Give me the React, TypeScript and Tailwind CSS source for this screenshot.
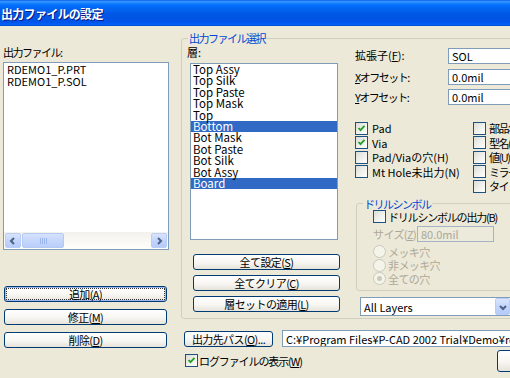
import React from "react";

const layers = [
	{ name: "Top Assy", selected: false },
	{ name: "Top Silk", selected: false },
	{ name: "Top Paste", selected: false },
	{ name: "Top Mask", selected: false },
	{ name: "Top", selected: false },
	{ name: "Bottom", selected: true },
	{ name: "Bot Mask", selected: false },
	{ name: "Bot Paste", selected: false },
	{ name: "Bot Silk", selected: false },
	{ name: "Bot Assy", selected: false },
	{ name: "Board", selected: true },
];

// MS UI Gothic has narrow kana, so tighten Japanese labels
const JP = "tracking-[-0.6px]";
const KANA = "tracking-[-1.5px]";

const XPButton: React.FC<{ children: React.ReactNode; className?: string; focus?: boolean }> = ({
	children,
	className = "",
	focus = false,
}) => (
	<div
		className={`flex p-[1px] rounded-[3px] border border-[#003C74] bg-[linear-gradient(to_bottom,#FFFFFF_0%,#F7F6F2_55%,#E6E3DA_100%)] ${
			focus ? "shadow-[inset_0_0_0_1px_#9DB7EE]" : ""
		} ${className}`}
	>
		<div
			className={`flex-1 flex items-center justify-center text-[11px] leading-[12px] text-black whitespace-nowrap ${JP} ${
				focus ? "border border-dotted border-[#333]" : ""
			}`}
		>
			<span>{children}</span>
		</div>
	</div>
);

const TextBox: React.FC<{ value: string; className?: string; disabled?: boolean }> = ({
	value,
	className = "",
	disabled = false,
}) => (
	<div
		className={`flex items-center pl-[3px] overflow-hidden whitespace-nowrap text-[11px] leading-[12px] border ${
			disabled ? "border-[#A5B1C4] bg-[#EBEADB] text-[#ACA899]" : "border-[#7F9DB9] bg-white text-black"
		} ${className}`}
	>
		{value}
	</div>
);

const CheckBox: React.FC<{ checked?: boolean }> = ({ checked = false }) => (
	<span className="w-[13px] h-[13px] shrink-0 border border-[#1C5180] bg-[linear-gradient(135deg,#DCDCD7_0%,#F2F2EF_60%,#FFFFFF_100%)] flex items-center justify-center">
		{checked && (
			<svg width="9" height="9" viewBox="0 0 9 9">
				<path d="M1.5 4 L3.5 6.2 L7.5 1.8" stroke="#21A121" strokeWidth="1.8" fill="none" />
			</svg>
		)}
	</span>
);

const Radio: React.FC<{ checked?: boolean }> = ({ checked = false }) => (
	<span className="w-[13px] h-[13px] shrink-0 rounded-full border border-[#CAC8BB] bg-[#F5F4EA] flex items-center justify-center">
		{checked && <span className="w-[5px] h-[5px] rounded-full bg-[#CAC8BB]" />}
	</span>
);

const Arrow: React.FC<{ dir: "left" | "right" | "down" }> = ({ dir }) => {
	const pts = dir === "left" ? "5,1 2,4 5,7" : dir === "right" ? "3,1 6,4 3,7" : "1,3 4,6 7,3";
	return (
		<svg width="8" height="8" viewBox="0 0 8 8">
			<polyline points={pts} stroke="#4D6185" strokeWidth="2" fill="none" />
		</svg>
	);
};

const ScrollButton: React.FC<{ dir: "left" | "right" | "down"; className?: string }> = ({ dir, className = "" }) => (
	<div
		className={`flex items-center justify-center shrink-0 rounded-[2px] border border-[#B9CDF6] bg-[linear-gradient(to_bottom,#D9E5FD_0%,#C3D5FC_50%,#B5CBF8_100%)] ${className}`}
	>
		<Arrow dir={dir} />
	</div>
);

const HScroll: React.FC = () => (
	<div className="h-[17px] shrink-0 flex items-center px-[1px] bg-[linear-gradient(to_bottom,#F3F1EC,#FEFEFB)]">
		<ScrollButton dir="left" className="w-[16px] h-[15px]" />
		<div className="ml-[1px] w-[42px] h-[15px] rounded-[2px] border border-[#B5C9F5] bg-[linear-gradient(to_bottom,#D6E2FD_0%,#C6D7FC_50%,#BACEFA_100%)] flex items-center justify-center gap-[1px]">
			<span className="w-[1px] h-[6px] bg-[#9DB6EF]" />
			<span className="w-[1px] h-[6px] bg-[#9DB6EF]" />
			<span className="w-[1px] h-[6px] bg-[#9DB6EF]" />
			<span className="w-[1px] h-[6px] bg-[#9DB6EF]" />
		</div>
		<ScrollButton dir="right" className="ml-auto w-[16px] h-[15px]" />
	</div>
);

const App: React.FC = () => {
	return (
		<div className="w-[510px] h-[378px] overflow-hidden bg-[#ECE9D8] flex flex-col font-['Noto_Sans_CJK_JP',sans-serif] text-black text-[11px] leading-[12px]">
			{/* title bar */}
			<div className="h-[26px] shrink-0 flex items-center pl-[1px] bg-[linear-gradient(to_bottom,#0058EE_0%,#3A93FF_5%,#288EFF_9%,#127DFF_14%,#036FFC_20%,#0262EE_38%,#0057E5_54%,#0054E3_70%,#0055EB_86%,#005BF5_90%,#0062EF_95%,#0048D0_100%)]">
				<span className="text-white font-bold text-[12px] leading-[13px] tracking-[-0.7px] [text-shadow:1px_1px_#0A1883]">
					出力ファイルの設定
				</span>
			</div>

			<div className="flex flex-1 min-h-0">
				{/* left column */}
				<div className="w-[181px] shrink-0 pl-[3px] pt-[20px] flex flex-col">
					<div className={`h-[12px] ${KANA}`}>出力ファイル:</div>
					<div className="mt-[4px] w-[166px] h-[188px] border border-[#7F9DB9] bg-white flex flex-col">
						<div className="flex-1 pl-[3px]">
							<div>RDEMO1_P.PRT</div>
							<div>RDEMO1_P.SOL</div>
						</div>
						<HScroll />
					</div>
					<div className="mt-[36px] ml-[1px] w-[163px] flex flex-col gap-[7px]">
						<XPButton focus className="h-[16px]">
							追加(A)
						</XPButton>
						<XPButton className="h-[16px]">
							修正(<span className="underline">M</span>)
						</XPButton>
						<XPButton className="h-[16px]">
							削除(<span className="underline">D</span>)
						</XPButton>
					</div>
				</div>

				{/* right area */}
				<div className="w-[340px] shrink-0 flex flex-col">
					<div className="relative mt-[12px] h-[281px] w-[340px] shrink-0 border border-[#D0D0BF] rounded-[3px] flex">
						<span className={`absolute -top-[7px] left-[6px] px-[1px] bg-[#ECE9D8] text-[#0046D5] ${KANA}`}>
							出力ファイル選択
						</span>

						{/* layer column */}
						<div className="w-[173px] shrink-0 pt-[7px] pl-[8px] flex flex-col">
							<div className="-ml-[3px] h-[12px]">層:</div>
							<div className="mt-[5px] w-[148px] h-[177px] border border-[#7F9DB9] bg-white">
								{layers.map((l) => (
									<div
										key={l.name}
										className={`h-[11.4px] pl-[2px] text-[11.5px] leading-[11.4px] ${
											l.selected ? "bg-[#316AC5] text-white" : "text-black"
										}`}
									>
										{l.name}
									</div>
								))}
							</div>
							<div className="mt-[14px] ml-[3px] w-[147px] flex flex-col gap-[5px]">
								<XPButton className="h-[16px]">
									全て設定(<span className="underline">S</span>)
								</XPButton>
								<XPButton className="h-[16px]">
									全てクリア(<span className="underline">C</span>)
								</XPButton>
								<XPButton className="h-[16px]">
									層セットの適用(<span className="underline">L</span>)
								</XPButton>
							</div>
						</div>

						{/* options column */}
						<div className="flex-1 pt-[9px] flex flex-col">
							<div className="flex items-center h-[16px]">
								<span className="w-[93px] self-start pt-[1px]">
									拡張子(<span className="underline">F</span>):
								</span>
								<TextBox value="SOL" className="w-[120px] h-[16px]" />
							</div>
							<div className="mt-[5px] flex items-center h-[16px]">
								<span className={`w-[93px] ${KANA}`}>
									<span className="underline">X</span>オフセット:
								</span>
								<TextBox value="0.0mil" className="w-[120px] h-[16px]" />
							</div>
							<div className="mt-[4px] flex items-center h-[16px]">
								<span className={`w-[93px] ${KANA}`}>
									<span className="underline">Y</span>オフセット:
								</span>
								<TextBox value="0.0mil" className="w-[120px] h-[16px]" />
							</div>

							<div className="mt-[16px] h-[73px] flex">
								<div className="w-[118px] shrink-0 flex flex-col">
									{[
										{ t: "Pad", c: true },
										{ t: "Via", c: true },
										{ t: "Pad/Viaの穴(H)", c: false },
										{ t: "Mt Hole未出力(N)", c: false },
									].map((r) => (
										<div key={r.t} className="h-[14.5px] flex items-center gap-[4px] whitespace-nowrap">
											<CheckBox checked={r.c} />
											<span>{r.t}</span>
										</div>
									))}
								</div>
								<div className="shrink-0 flex flex-col">
									{["部品名(R)", "型名(P)", "値(U)", "ミラー(I)", "タイトル(E)"].map((t) => (
										<div key={t} className="h-[14.5px] flex items-center gap-[3px] whitespace-nowrap">
											<CheckBox />
											<span className={KANA}>{t}</span>
										</div>
									))}
								</div>
							</div>

							{/* drill symbol group */}
							<div className="relative mt-[9px] ml-[1px] h-[88px] w-[170px] shrink-0 border border-[#D0D0BF] rounded-[3px] pl-[16px] pt-[6px] flex flex-col">
								<span className={`absolute -top-[6px] left-[6px] px-[1px] bg-[#ECE9D8] text-[#0046D5] ${KANA}`}>
									ドリルシンボル
								</span>
								<div className="h-[13px] flex items-center gap-[2px] whitespace-nowrap">
									<CheckBox />
									<span className="tracking-[-1.2px]">ドリルシンボルの出力(B)</span>
								</div>
								<div className="mt-[3px] h-[16px] flex items-center">
									<span className={`w-[44px] shrink-0 text-[#ACA899] whitespace-nowrap ${JP}`}>
										サイズ(<span className="underline">Z</span>):
									</span>
									<TextBox value="80.0mil" disabled className="w-[77px] h-[16px] shrink-0" />
								</div>
								<div className={`mt-[3px] flex flex-col text-[#ACA899] ${JP}`}>
									<div className="h-[13.5px] flex items-center gap-[2px]">
										<Radio />
										<span>メッキ穴</span>
									</div>
									<div className="h-[13.5px] flex items-center gap-[2px]">
										<Radio />
										<span>非メッキ穴</span>
									</div>
									<div className="h-[13.5px] flex items-center gap-[2px]">
										<Radio checked />
										<span>全ての穴</span>
									</div>
								</div>
							</div>

							<div className="mt-[6px] ml-[5px] w-[151px] h-[19px] shrink-0 border border-[#7F9DB9] bg-white flex items-center">
								<span className="flex-1 pl-[3px]">All Layers</span>
								<ScrollButton dir="down" className="w-[15px] h-full" />
							</div>
						</div>
					</div>

					{/* output path */}
					<div className="mt-[11px] flex items-center">
						<XPButton className="ml-[3px] w-[89px] h-[16px] shrink-0">
							出力先パス(<span className="underline">O</span>)...
						</XPButton>
						<TextBox
							value="C:¥Program Files¥P-CAD 2002 Trial¥Demo¥rdemo1"
							className="ml-[9px] w-[240px] h-[17px] shrink-0"
						/>
					</div>

					{/* log */}
					<div className="mt-[3px] flex items-start">
						<div className="ml-[4px] mt-[4px] w-[312px] shrink-0 flex items-center gap-[1px]">
							<CheckBox checked />
							<span className="tracking-[-1.1px]">
								ログファイルの表示(<span className="underline">W</span>)
							</span>
						</div>
						<XPButton className="w-[75px] h-[22px] shrink-0">OK</XPButton>
					</div>
				</div>
			</div>
		</div>
	);
};

export default App;
